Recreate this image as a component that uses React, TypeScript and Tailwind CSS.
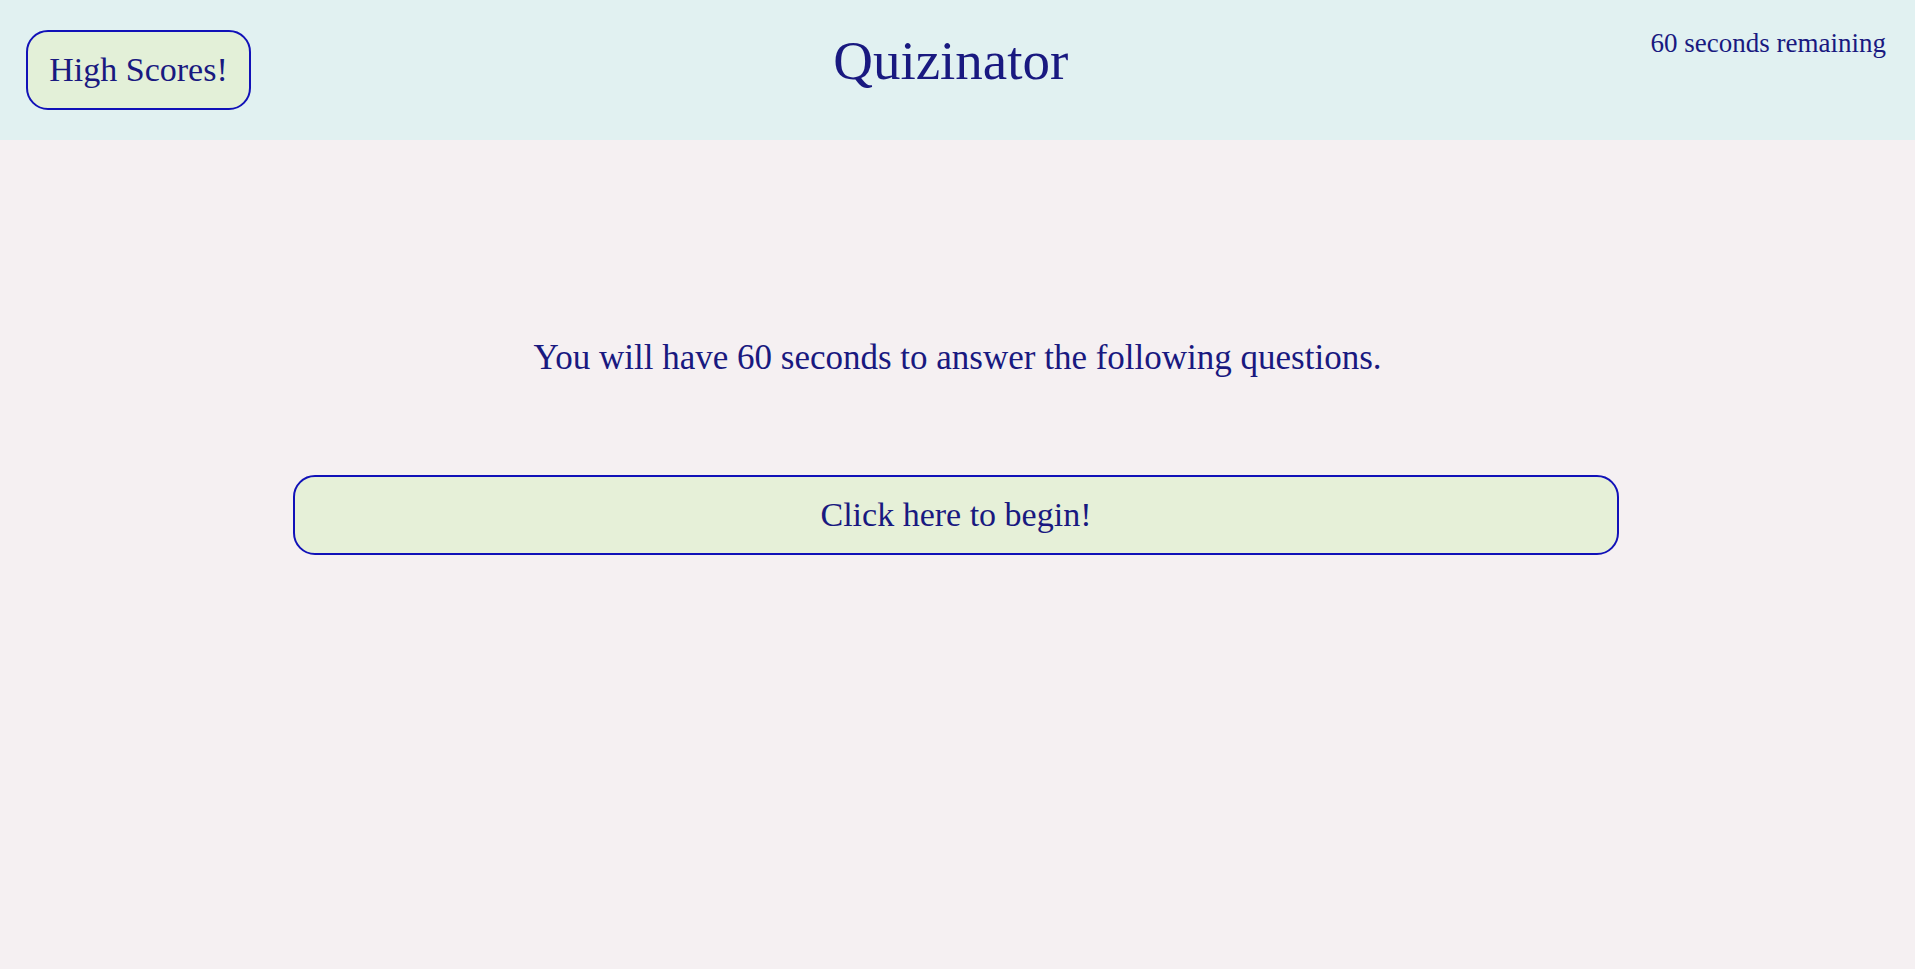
import React, { useState } from 'react';

const serif = "font-['Liberation_Serif',serif]";

function App() {
  const [seconds] = useState(60);

  return (
    <div className={`min-h-screen bg-[#f5f0f2] text-[#191980] ${serif}`}>
      {/* Header */}
      <header className="flex h-[140px] items-start justify-between bg-[#e1f1f1]">
        <button className="ml-[26px] mt-[30px] h-[80px] w-[225px] rounded-[22px] border-2 border-[#1111b8] bg-[#e3f0d8] text-[34px] leading-none text-[#191980]">
          High Scores!
        </button>
        <h1 className="mt-[33px] text-[55px] leading-none">Quizinator</h1>
        <div className="mr-[29px] mt-[30px] text-[27px] leading-none">
          {seconds} seconds remaining
        </div>
      </header>

      {/* Main */}
      <main className="flex flex-col items-center">
        <p className="mt-[200px] text-[35px] leading-none">
          You will have {seconds} seconds to answer the following questions.
        </p>
        <button className="mr-[3px] mt-[100px] h-[80px] w-[1326px] rounded-[22px] border-2 border-[#1111b8] bg-[#e6f0d8] text-[34px] leading-none text-[#191980]">
          Click here to begin!
        </button>
      </main>
    </div>
  );
}

export default App;
